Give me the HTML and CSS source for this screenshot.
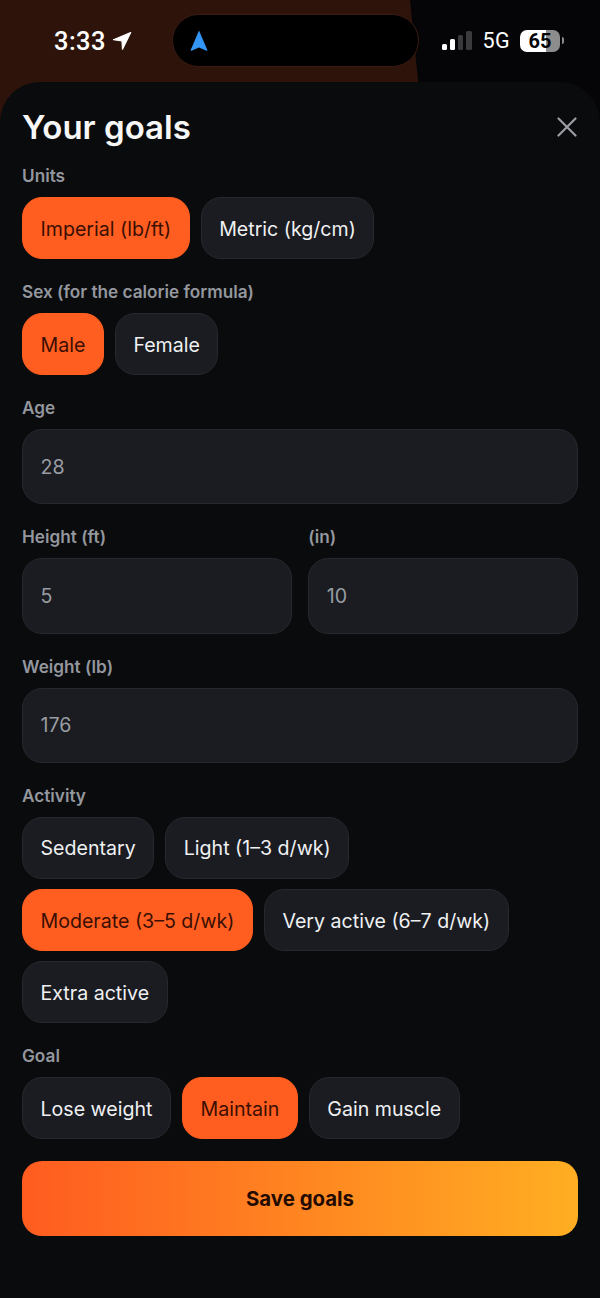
FILE: index.html
```html
<!DOCTYPE html>
<html lang="en">
<head>
    <meta charset="UTF-8">
    <meta name="viewport" content="width=device-width, initial-scale=1.0">
    <title>Your goals</title>
    <link rel="stylesheet" href="styles.css">
</head>
<body>
    <div class="wallpaper"></div>

    <div class="status-bar">
        <div class="status-left">
            <span class="time">3:33</span>
            <svg class="location" width="20" height="20" viewBox="0 0 20 20"><path d="M18.700 1.500 1.500 8.700 10 10l.5 8.200z" fill="#fff" stroke="#fff" stroke-width="1.200" stroke-linejoin="round"/></svg>
        </div>
        <div class="island">
            <svg width="18" height="22" viewBox="0 0 18 22"><path d="M9 .5 17.300 20c.2.600-.3 1-.8.700L9 17.600 1.500 20.700c-.5.300-1-.1-.8-.7z" fill="#3395f5"/></svg>
        </div>
        <div class="status-right">
            <div class="signal">
                <span class="bar bar-1"></span>
                <span class="bar bar-2"></span>
                <span class="bar bar-3"></span>
                <span class="bar bar-4"></span>
            </div>
            <span class="network">5G</span>
            <div class="battery"><span class="battery-level">65</span></div>
            <span class="battery-tip"></span>
        </div>
    </div>

    <div class="sheet">
        <div class="sheet-header">
            <h1>Your goals</h1>
            <svg class="close" width="20" height="20" viewBox="0 0 20 20"><path d="M1.500 1.500 18.500 18.500M18.500 1.500 1.500 18.500" stroke="#9b9ea4" stroke-width="2.200" stroke-linecap="round"/></svg>
        </div>

        <div class="group">
            <div class="label">Units</div>
            <div class="chips">
                <button class="chip active">Imperial (lb/ft)</button>
                <button class="chip">Metric (kg/cm)</button>
            </div>
        </div>

        <div class="group">
            <div class="label">Sex (for the calorie formula)</div>
            <div class="chips">
                <button class="chip active">Male</button>
                <button class="chip">Female</button>
            </div>
        </div>

        <div class="group">
            <div class="label">Age</div>
            <div class="field">28</div>
        </div>

        <div class="group two-col">
            <div>
                <div class="label">Height (ft)</div>
                <div class="field">5</div>
            </div>
            <div>
                <div class="label">(in)</div>
                <div class="field">10</div>
            </div>
        </div>

        <div class="group">
            <div class="label">Weight (lb)</div>
            <div class="field">176</div>
        </div>

        <div class="group">
            <div class="label">Activity</div>
            <div class="chips">
                <button class="chip">Sedentary</button>
                <button class="chip">Light (1–3 d/wk)</button>
                <button class="chip active">Moderate (3–5 d/wk)</button>
                <button class="chip">Very active (6–7 d/wk)</button>
                <button class="chip">Extra active</button>
            </div>
        </div>

        <div class="group">
            <div class="label">Goal</div>
            <div class="chips">
                <button class="chip">Lose weight</button>
                <button class="chip active">Maintain</button>
                <button class="chip">Gain muscle</button>
            </div>
        </div>

        <button class="save">Save goals</button>
    </div>
</body>
</html>
```

FILE: styles.css
```css
* {
    box-sizing: border-box;
}
html, body {
    margin: 0;
    height: 100%;
}
body {
    position: relative;
    height: 1298px;
    overflow: hidden;
    font-family: Inter, "Liberation Sans", sans-serif;
    background-color: #050507;
    color: #fff;
}
.wallpaper {
    position: absolute;
    top: 0;
    left: 0;
    width: 420px;
    height: 130px;
    background-color: #2e130a;
    clip-path: polygon(0 0, 410px 0, 419px 90px, 419px 130px, 0 130px);
}
.status-bar {
    position: relative;
    display: flex;
    align-items: center;
    height: 82px;
    padding: 0 36px 0 54px;
}
.status-left {
    display: flex;
    align-items: center;
    gap: 6px;
    width: 118px;
}
.time {
    font-family: Roboto, Inter, sans-serif;
    font-size: 25.500px;
    font-weight: 500;
    letter-spacing: 0.4px;
}
.island {
    display: flex;
    align-items: center;
    width: 247px;
    height: 53px;
    margin-top: -1px;
    padding-left: 17px;
    background-color: #000;
    border: 1px solid #3a1c12;
    border-radius: 27px;
}
.status-right {
    display: flex;
    align-items: center;
    margin-left: 23px;
    margin-top: -1px;
}
.signal {
    display: flex;
    align-items: flex-end;
    gap: 2.800px;
    height: 19px;
    margin-right: 11px;
}
.bar {
    width: 5.300px;
    border-radius: 1.500px;
    background-color: #fff;
}
.bar-1 { height: 6px; }
.bar-2 { height: 11px; }
.bar-3 { height: 15px; background-color: #3a3a3c; }
.bar-4 { height: 19px; background-color: #3a3a3c; }
.network {
    font-family: Roboto, Inter, sans-serif;
    font-size: 21.500px;
    letter-spacing: 0.3px;
    margin-right: 10px;
}
.battery {
    width: 40px;
    height: 22px;
    border-radius: 7px;
    background: linear-gradient(to right, #fff 64%, #8c8c8c 64%);
    color: #050507;
    font-family: Roboto, Inter, sans-serif;
    font-size: 20px;
    font-weight: 700;
    line-height: 22px;
    text-align: center;
}
.battery-tip {
    width: 2px;
    height: 7px;
    margin-left: 2px;
    border-radius: 0 2px 2px 0;
    background-color: #8c8c8c;
}
.sheet {
    position: relative;
    height: 1216px;
    padding: 0 22px;
    background-color: #0a0b0d;
    border-radius: 40px 40px 0 0;
}
.sheet-header {
    display: flex;
    align-items: center;
    justify-content: space-between;
    height: 84px;
    padding-right: 1px;
}
h1 {
    margin: 6px 0 0;
    color: #f7f7f7;
    font-size: 33px;
    font-weight: 600;
}
.close {
    margin-top: 6px;
}
.group {
    margin-bottom: 23px;
}
.two-col {
    display: grid;
    grid-template-columns: 1fr 1fr;
    gap: 16.500px;
}
.label {
    height: 20px;
    margin-bottom: 11px;
    color: #94979e;
    font-size: 17.200px;
    font-weight: 600;
    line-height: 20px;
}
.chips {
    display: flex;
    flex-wrap: wrap;
    gap: 10.200px 11px;
}
.chip {
    height: 62px;
    padding: 1px 17.500px 0;
    border: 1px solid #26282e;
    border-radius: 20px;
    background-color: #1a1c21;
    color: #eff0f2;
    font-family: inherit;
    font-size: 19.600px;
    cursor: pointer;
}
.chip.active {
    border-color: #ff5e20;
    background-color: #ff5e20;
    color: #3a0f02;
}
.field {
    display: flex;
    align-items: center;
    height: 75.330px;
    padding: 0 17.500px;
    border: 1px solid #26282e;
    border-radius: 20px;
    background-color: #1a1c21;
    color: #999ca3;
    font-size: 19.600px;
}
.save {
    display: block;
    width: 100%;
    height: 75px;
    margin-top: -1px;
    border: none;
    border-radius: 20px;
    background: linear-gradient(to right, #ff5c20, #ffae22);
    color: #240b02;
    font-family: inherit;
    font-size: 20.400px;
    font-weight: 700;
    cursor: pointer;
}
```
